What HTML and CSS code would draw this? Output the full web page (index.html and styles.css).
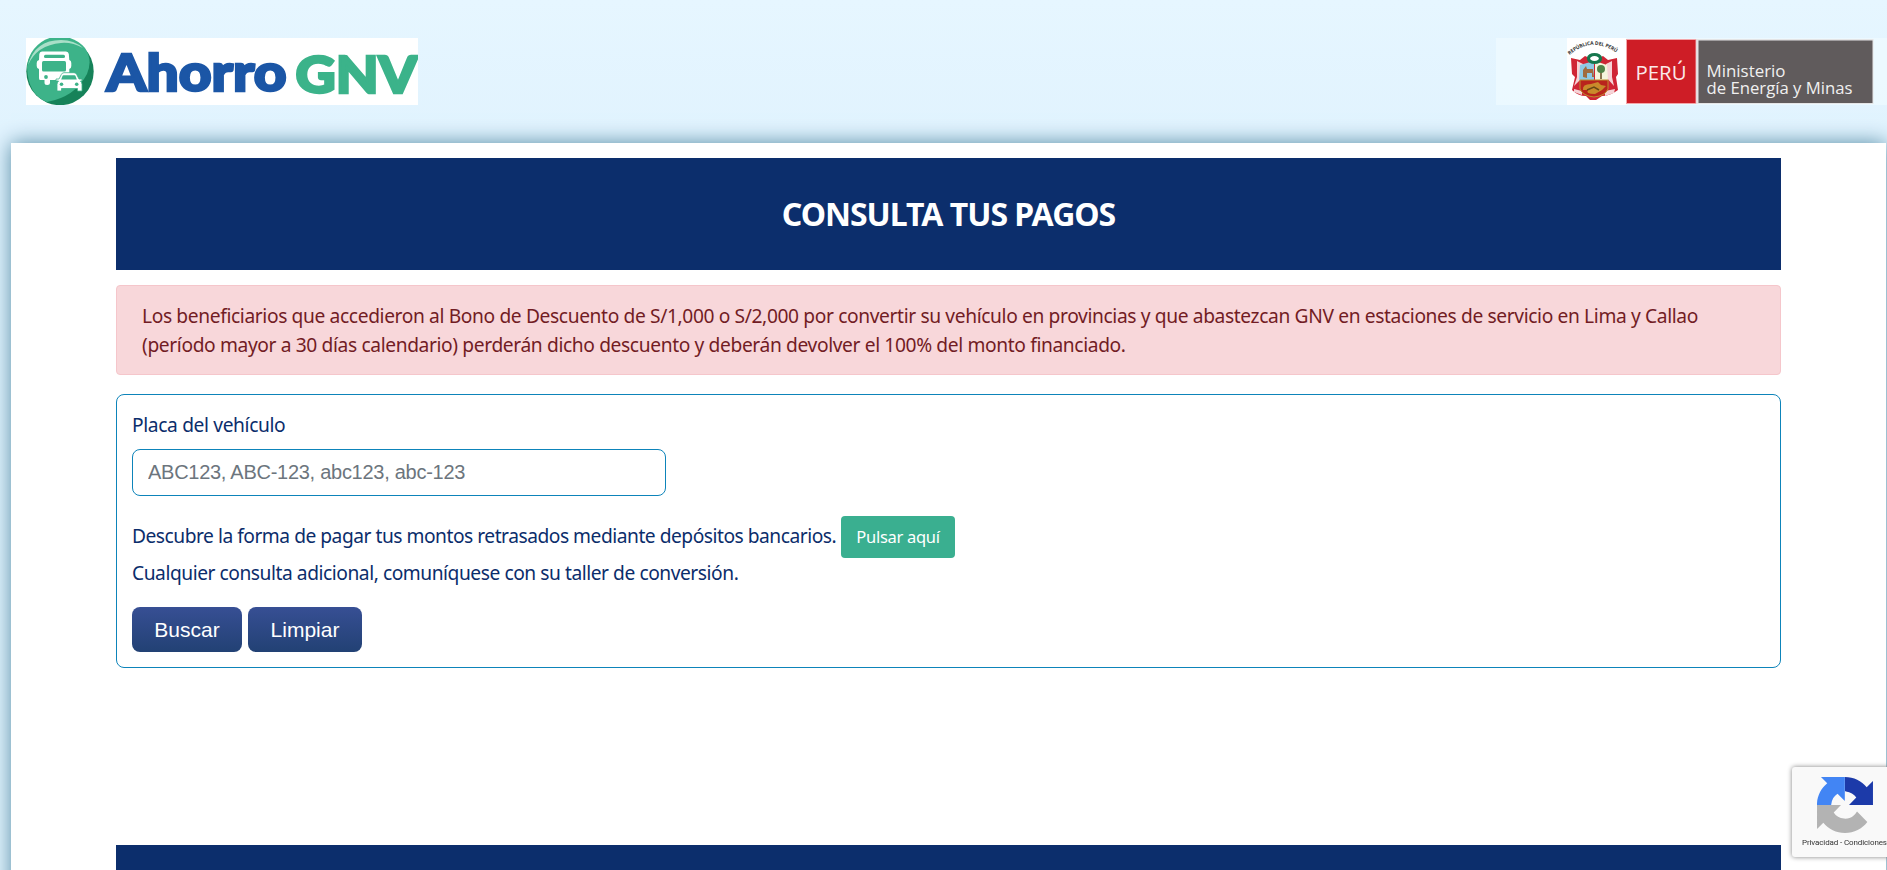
FILE: index.html
```
<!DOCTYPE html>
<html lang="es">
<head>
<meta charset="utf-8">
<title>Ahorro GNV</title>
<link rel="stylesheet" href="styles.css">
</head>
<body>
<header class="header">
  <svg class="brand" width="392" height="67" viewBox="26 38 392 67" role="img" aria-label="Ahorro GNV">
    <rect x="26" y="38" width="392" height="67" fill="#fff"/>
    <circle cx="60" cy="71.5" r="33.7" fill="#168259"/>
    <path d="M27 67a33 33 0 0 1 58-19q8 12 2 26Q75 97 47 102Q28 95 27 67z" fill="#3db389"/>
    <path d="M28 65Q35 40 61 40Q74 40 83 48Q72 42 61 43Q37 45 28 65z" fill="#a9dfc8"/>
    <path d="M42 51.500h24q2.500 0 2.800 2.500l.5 6q2 .5 2 3v3q0 2.500-2 3V80H50v2.500q0 2.500-2.800 2.500T44.500 82.500V80H40q-1 0-1-2V69q-2.300-.5-2.300-3v-3q0-2.500 2.300-3l.3-6q.3-2.500 2.700-2.500z" fill="#fff"/>
    <rect x="44" y="54.800" width="21" height="3.200" rx="1.500" fill="#3db389"/>
    <rect x="42" y="61" width="24" height="10.500" rx="1.500" fill="#3db389"/>
    <circle cx="46" cy="77" r="1.900" fill="#3db389"/>
    <path d="M59 79l2.300-4.500q.8-1.800 2.700-1.800h10q2 0 2.700 1.800L79 79h3v2h-1.500q1.500 1.500 1.500 3.500V91h-4.500v-2.500h-16V91H57v-6.500q0-2 1.500-3.500H56v-2z" fill="#fff" stroke="#3db389" stroke-width=".8"/>
    <path d="M63.500 75.300h11q.7 0 1 .7l1.300 3.500H61.200l1.300-3.500q.3-.7 1-.7z" fill="#3db389"/>
    <circle cx="61.500" cy="84.300" r="1.800" fill="#3db389"/><circle cx="76.700" cy="84.300" r="1.800" fill="#3db389"/>
    <text class="brand-blue" x="106.500" y="91" textLength="180" lengthAdjust="spacingAndGlyphs">Ahorro</text>
    <text class="brand-green" x="295.500" y="93" textLength="122" lengthAdjust="spacingAndGlyphs">GNV</text>
  </svg>
  <svg class="ministry" width="391" height="67" viewBox="1496 38 391 67" role="img" aria-label="Ministerio de Energía y Minas">
    <defs><path id="arc" d="M1569.500 55Q1593 35 1619 54.500"/></defs>
    <rect x="1496" y="38" width="391" height="67" fill="#f2fbff" opacity=".6"/>
    <rect x="1567" y="38" width="59.500" height="67" fill="#fff"/>
    <text class="crest-text"><textPath href="#arc" textLength="51">REPÚBLICA DEL PERÚ</textPath></text>
    <g>
      <path d="M1571 58l9 2 5-4 9 4 9-4 5 4 9-2 1 16-2 3 2 13q-8 6-16 6l-6 4h-6l-4-4q-8 0-14-6l3-13-3-3z" fill="#cf2535"/>
      <path d="M1577 61l6 3v13l-9 9 3-9zM1612 61l-6 3v13l8 9-2-9zM1574 89l8 2v4l-8-3zM1605 91l10-2-1 4-9 3z" fill="#fff" opacity=".8"/>
      <path d="M1580 65l14-4v19h-15z" fill="#8ec9e4"/>
      <path d="M1595 61l12 4 1 15h-13z" fill="#f4f5dc"/>
      <path d="M1583 77v-7l3-4 1 3h6l1 8h-2v-4h-5v5z" fill="#a06b3e"/>
      <path d="M1601 79v-7" stroke="#654920" stroke-width="1.500"/><circle cx="1601" cy="69" r="4" fill="#508348"/>
      <path d="M1580 80h28v9q-3 7-14 8-11-1-14-8z" fill="#b9241c" stroke="#bd8d2c"/>
      <path d="M1583 90q-1-6 8-6l7-2 3 3 5 1-4 4-7 4q-10 0-7-4z" fill="#c98a2b"/>
      <path d="M1587 90l7-3 5 3" fill="none" stroke="#674815" stroke-width="1.500"/>
      <ellipse cx="1594.500" cy="58.500" rx="6" ry="4" fill="#fff" stroke="#16774e" stroke-width="3.200"/>
    </g>
    <rect x="1626.500" y="39.500" width="69.500" height="64" fill="#ce1d26" stroke="#f3a6aa"/>
    <rect x="1696.500" y="39" width="177" height="65" fill="#e4e5e6"/>
    <rect x="1698.500" y="40.500" width="174" height="62.500" fill="#605b5c"/>
    <text class="peru" x="1635.500" y="79.500" textLength="51" lengthAdjust="spacingAndGlyphs">PERÚ</text>
    <text class="dept" x="1706.500" y="76.500" textLength="79" lengthAdjust="spacingAndGlyphs">Ministerio</text>
    <text class="dept" x="1706.500" y="94.200" textLength="146" lengthAdjust="spacingAndGlyphs">de Energía y Minas</text>
  </svg>
</header>
<main class="page">
  <h1 class="title">CONSULTA TUS PAGOS</h1>
  <div class="alert">Los beneficiarios que accedieron al Bono de Descuento de S/1,000 o S/2,000 por convertir su vehículo en provincias y que abastezcan GNV en estaciones de servicio en Lima y Callao<br>(período mayor a 30 días calendario) perderán dicho descuento y deberán devolver el 100% del monto financiado.</div>
  <form class="panel">
    <label class="label" for="placa">Placa del vehículo</label>
    <input class="input" id="placa" type="text" placeholder="ABC123, ABC-123, abc123, abc-123">
    <div class="pay"><span class="pay-text">Descubre la forma de pagar tus montos retrasados mediante depósitos bancarios.</span><a class="pay-button">Pulsar aquí</a></div>
    <p class="note">Cualquier consulta adicional, comuníquese con su taller de conversión.</p>
    <div class="actions"><button class="button buscar" type="button">Buscar</button><button class="button limpiar" type="button">Limpiar</button></div>
  </form>
  <footer class="footer"></footer>
</main>
<aside class="captcha">
  <svg class="captcha-logo" width="56" height="56" viewBox="0 0 64 64">
    <path d="M64 31.955a33 33 0 0 0-.038-1.375V4.634l-7.173 7.173C50.920 4.622 41.992.040 31.995.040v16.260c.483 0 .856.056 1.130.163 4.952.390 9.245 3.123 11.773 7.090l-8.323 8.323 27.425.080" fill="#1c3aa9"/>
    <path d="M31.862.040a33 33 0 0 0-1.374.038H4.542l7.173 7.172C4.530 13.120-.053 22.048-.053 32.045h16.260c0-.483.057-.855.164-1.130.390-4.952 3.122-9.244 7.090-11.773l8.322 8.323.080-27.424" fill="#4285f4"/>
    <path d="M.001 32.045c.001.461.013.919.037 1.374v25.946l7.173-7.172c5.869 7.185 14.797 11.767 24.794 11.767 10.403 0 19.645-4.960 25.484-12.640L45.730 39.440a15.600 15.600 0 0 1-4.764 5.347c-2.054 1.603-4.964 2.914-8.961 2.914-.483 0-.856-.056-1.130-.163-4.952-.390-9.245-3.123-11.773-7.090l8.323-8.323L0 32.045" fill="#b3b3b3"/>
  </svg>
  <div class="captcha-text">Privacidad - Condiciones</div>
</aside>
</body>
</html>
```

FILE: styles.css
```
* { box-sizing: border-box; }
html, body { height: 100%; }
body {
  margin: 0;
  overflow: hidden;
  background: linear-gradient(#e6f6ff, #e1f3fe 130px, #e1f3fd);
  font-family: "Noto Sans", "Open Sans", sans-serif;
  font-size: 19.2px;
  line-height: 28.8px;
  color: #0b2d6b;
}
.header {
  height: 143px;
  padding: 38px 0 0 26px;
  display: flex;
  align-items: flex-start;
  justify-content: space-between;
}
.brand-blue { font: 900 51px Lato, sans-serif; fill: #1b56a6; stroke: #1b56a6; stroke-width: 2.4; }
.brand-green { font: 900 52px Lato, sans-serif; fill: #3bb38a; stroke: #3bb38a; stroke-width: 2.6; }
.crest-text { font: bold 5px "Open Sans", sans-serif; fill: #333; }
.peru { font: 20px "Open Sans", sans-serif; fill: #fbe9ea; }
.dept { font: 17px "Open Sans", sans-serif; fill: #f0f0f0; }
.page {
  height: 760px;
  margin: 0 1px 0 11px;
  padding: 15px 105px 0;
  background: #fff;
  box-shadow: 0 0 20px #568ba5;
}
.title {
  height: 112px;
  margin: 0 0 15px;
  background: #0c2e6c;
  color: #fff;
  font-size: 32px;
  font-weight: 700;
  line-height: 111px;
  text-align: center;
  letter-spacing: -1px;
}
.alert {
  height: 90px;
  margin-bottom: 19px;
  padding: 16px 25px;
  border: 1px solid #f5c6cb;
  border-radius: 4px;
  background: #f8d7da;
  color: #721c24;
  white-space: nowrap;
  letter-spacing: -.37px;
}
.panel {
  height: 274px;
  padding: 16px 15px;
  border: 1px solid #0d84ba;
  border-radius: 8px;
}
.label { display: block; height: 38px; letter-spacing: -.36px; }
.input {
  display: block;
  width: 534px;
  height: 47px;
  padding: 0 15px;
  border: 1px solid #0d84ba;
  border-radius: 8px;
  font: 20px "Liberation Sans", sans-serif;
  letter-spacing: -.27px;
}
.input::placeholder { color: #6c757d; opacity: 1; }
.pay {
  display: flex;
  gap: 5px;
  margin-top: 20px;
  line-height: 42px;
  white-space: nowrap;
}
.pay-text { width: 704px; line-height: 40px; letter-spacing: -.48px; }
.pay-button {
  width: 114px;
  height: 42px;
  border-radius: 4px;
  background: #3aaf90;
  color: #fff;
  font-size: 16.5px;
  text-align: center;
  letter-spacing: -.3px;
}
.note { margin: 0; height: 49px; line-height: 29px; letter-spacing: -.45px; }
.actions { display: flex; gap: 6px; }
.button {
  height: 45px;
  padding: 0;
  border: 0;
  border-radius: 8px;
  background: linear-gradient(#374f94, #224174);
  color: #fff;
  font: 21px "Liberation Sans", sans-serif;
}
.buscar { width: 110px; }
.limpiar { width: 114px; }
.footer { height: 60px; margin-top: 177px; background: #0c2e6c; }
.captcha {
  position: fixed;
  left: 1792px;
  top: 767px;
  width: 256px;
  height: 90px;
  padding: 10px 0 0 10px;
  border-radius: 3px;
  background: #f9f9f9;
  box-shadow: 0 0 5px gray;
}
.captcha-logo { display: block; margin-left: 15px; }
.captcha-text {
  margin-top: 3px;
  font: 8px/14px Roboto, sans-serif;
  letter-spacing: -.12px;
  color: #333;
  white-space: nowrap;
}
```
